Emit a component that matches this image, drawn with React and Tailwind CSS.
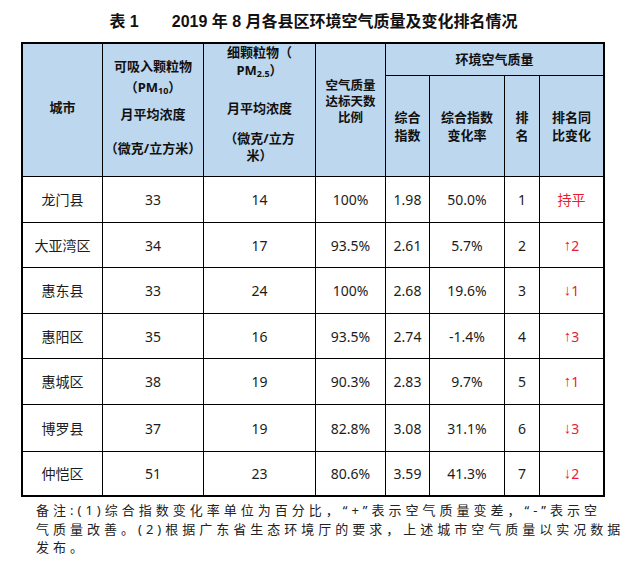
import React from 'react';

const rows = [
  { city: '龙门县', pm10: '33', pm25: '14', ratio: '100%', idx: '1.98', rate: '50.0%', rank: '1', change: '持平' },
  { city: '大亚湾区', pm10: '34', pm25: '17', ratio: '93.5%', idx: '2.61', rate: '5.7%', rank: '2', change: '↑2' },
  { city: '惠东县', pm10: '33', pm25: '24', ratio: '100%', idx: '2.68', rate: '19.6%', rank: '3', change: '↓1' },
  { city: '惠阳区', pm10: '35', pm25: '16', ratio: '93.5%', idx: '2.74', rate: '-1.4%', rank: '4', change: '↑3' },
  { city: '惠城区', pm10: '38', pm25: '19', ratio: '90.3%', idx: '2.83', rate: '9.7%', rank: '5', change: '↑1' },
  { city: '博罗县', pm10: '37', pm25: '19', ratio: '82.8%', idx: '3.08', rate: '31.1%', rank: '6', change: '↓3' },
  { city: '仲恺区', pm10: '51', pm25: '23', ratio: '80.6%', idx: '3.59', rate: '41.3%', rank: '7', change: '↓2' },
];

const head = 'bg-[#bdd7ee] flex flex-col items-center justify-center text-center font-bold text-[13px] text-[#111]';
const cell = 'bg-white flex items-center justify-center text-[14px] text-[#1c1c1c]';

export default function App() {
  return (
    <div
      className="w-[627px] h-[571px] bg-white overflow-hidden"
      style={{ fontFamily: '"Noto Sans", "Noto Sans CJK SC", sans-serif' }}
    >
      <div className="pt-[11px] h-[42px] flex justify-center">
        <h1
          className="text-[16px] leading-[22px] font-bold text-[#111] whitespace-nowrap"
          style={{ fontFamily: '"Liberation Sans", "Noto Sans CJK SC", sans-serif' }}
        >
          <span className="mr-[33px]">表 1</span>2019 年 8 月各县区环境空气质量及变化排名情况
        </h1>
      </div>

      <div className="ml-[21px] w-[584px] border-2 border-black bg-black grid gap-px grid-cols-[79px_100px_111px_69px_43px_74px_34px_63px] grid-rows-[31px_100px_45px_44px_45px_44px_45px_46px_43px]">
        <div className={`${head} row-span-2 pb-[5px]`}>城市</div>
        <div className={`${head} row-span-2 pb-[6px] leading-[16px]`}>
          <div>可吸入颗粒物</div>
          <div className="mt-[5px]">（PM<span className="text-[9px] relative top-[2px]">10</span>）</div>
          <div className="mt-[9px]">月平均浓度</div>
          <div className="mt-[18px]">（微克/立方米）</div>
        </div>
        <div className={`${head} row-span-2 pb-[13px] leading-[16px]`}>
          <div>细颗粒物（</div>
          <div className="mt-[2px]">PM<span className="text-[9px] relative top-[2px]">2.5</span>）</div>
          <div className="mt-[20px]">月平均浓度</div>
          <div className="mt-[14px]">（微克/立方</div>
          <div className="mt-[1px]">米）</div>
        </div>
        <div className={`${head} row-span-2 pb-[16px] leading-[16px] !text-[12.5px]`}>
          <div>空气质量</div>
          <div>达标天数</div>
          <div>比例</div>
        </div>
        <div className={`${head} col-span-4`}>环境空气质量</div>
        <div className={`${head} leading-[18px]`}>
          <div>综合</div>
          <div>指数</div>
        </div>
        <div className={`${head} leading-[18px]`}>
          <div>综合指数</div>
          <div>变化率</div>
        </div>
        <div className={`${head} leading-[18px]`}>
          <div>排</div>
          <div>名</div>
        </div>
        <div className={`${head} leading-[18px]`}>
          <div>排名同</div>
          <div>比变化</div>
        </div>

        {rows.map((r) => (
          <React.Fragment key={r.city}>
            <div className={cell}>{r.city}</div>
            <div className={cell}>{r.pm10}</div>
            <div className={cell}>{r.pm25}</div>
            <div className={cell}>{r.ratio}</div>
            <div className={cell}>{r.idx}</div>
            <div className={cell}>{r.rate}</div>
            <div className={cell}>{r.rank}</div>
            <div className={`${cell} !text-[#ec1c2e]`}>
              {r.change.length === 2 && /[↑↓]/.test(r.change[0]) ? (
                <>
                  <span className="text-[15px]" style={{ fontFamily: '"Liberation Sans", sans-serif' }}>{r.change[0]}</span>
                  {r.change[1]}
                </>
              ) : (
                r.change
              )}
            </div>
          </React.Fragment>
        ))}
      </div>

      <div className="ml-[36px] mt-[4px] text-[13px] leading-[18.5px] text-[#222] whitespace-nowrap">
        <div className="tracking-[4px]">备注:(1)综合指数变化率单位为百分比，“+”表示空气质量变差，“-”表示空</div>
        <div className="tracking-[4px]">气质量改善。(2)根据广东省生态环境厅的要求，上述城市空气质量以实况数据</div>
        <div className="tracking-[4px]">发布。</div>
      </div>
    </div>
  );
}
